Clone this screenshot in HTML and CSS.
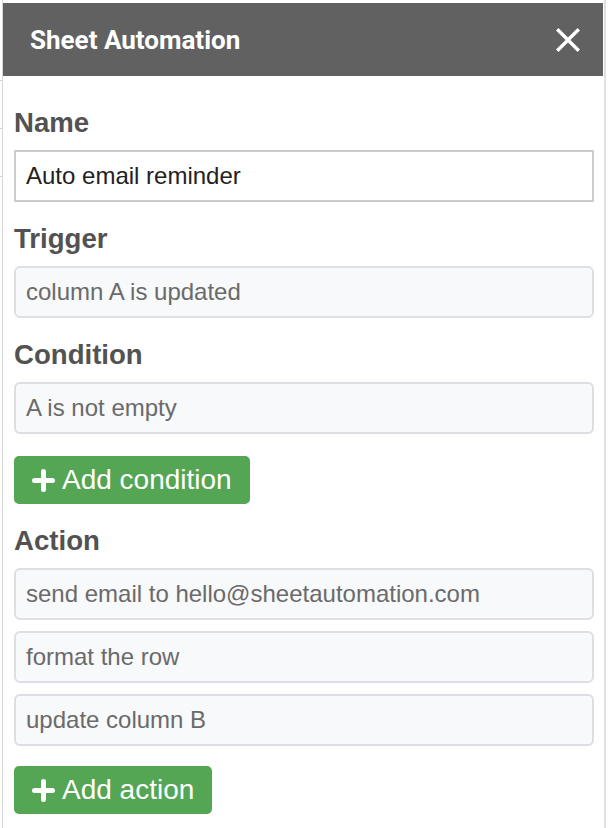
FILE: index.html
```html
<!DOCTYPE html>
<html lang="en">
<head>
<meta charset="utf-8">
<title>Sheet Automation</title>
<link rel="stylesheet" href="styles.css">
</head>
<body>
<div class="sidebar">
  <header class="topbar">
    <h1 class="title">Sheet Automation</h1>
    <button class="close" type="button" aria-label="Close">
      <svg width="24" height="24" viewBox="5 5 14 14" aria-hidden="true"><path fill="#fff" d="M19 6.41L17.59 5 12 10.59 6.41 5 5 6.41 10.59 12 5 17.59 6.41 19 12 13.41 17.59 19 19 17.59 13.41 12z"/></svg>
    </button>
  </header>
  <main class="content">
    <label class="label first">Name</label>
    <input class="field editable" type="text" value="Auto email reminder">

    <label class="label">Trigger</label>
    <input class="field locked" type="text" value="column A is updated" readonly>

    <label class="label">Condition</label>
    <input class="field locked" type="text" value="A is not empty" readonly>

    <button class="add" type="button">
      <svg class="plus" width="23" height="23" viewBox="0 0 23 23" aria-hidden="true"><path d="M11.5 2.5V20.5M2.5 11.5H20.5" stroke="#fff" stroke-width="5" stroke-linecap="round" fill="none"/></svg>
      <span>Add condition</span>
    </button>

    <label class="label">Action</label>
    <div class="stack">
      <input class="field locked" type="text" value="send email to hello@sheetautomation.com" readonly>
      <input class="field locked" type="text" value="format the row" readonly>
      <input class="field locked" type="text" value="update column B" readonly>
    </div>

    <button class="add" type="button">
      <svg class="plus" width="23" height="23" viewBox="0 0 23 23" aria-hidden="true"><path d="M11.5 2.5V20.5M2.5 11.5H20.5" stroke="#fff" stroke-width="5" stroke-linecap="round" fill="none"/></svg>
      <span>Add action</span>
    </button>
  </main>
</div>
</body>
</html>
```
FILE: styles.css
```css
html, body {
  margin: 0;
  padding: 0;
}

body {
  width: 608px;
  height: 828px;
  overflow: hidden;
  background-color: #ffffff;
  background-image:
    linear-gradient(#d4d4d4, #d4d4d4),
    linear-gradient(#d4d4d4, #d4d4d4),
    linear-gradient(#d4d4d4, #d4d4d4);
  background-size: 2px 1px, 2px 1px, 2px 1px;
  background-position: 0 80px, 0 128px, 0 176px;
  background-repeat: no-repeat;
  font-family: "Liberation Sans", Arial, sans-serif;
}

.sidebar {
  box-sizing: border-box;
  margin-left: 2px;
  width: 604px;
  height: 828px;
  padding: 3px 1px 0 0;
  border-left: 1px solid #d6d6d6;
  border-right: 2px solid #e0e0e0;
  background: #ffffff;
  display: flex;
  flex-direction: column;
}

.topbar {
  height: 73px;
  flex: none;
  background: #616161;
  display: flex;
  align-items: center;
  justify-content: space-between;
  padding: 0 23px 0 27px;
}

.title {
  margin: 0;
  font-family: Roboto, "Liberation Sans", sans-serif;
  font-weight: 700;
  font-size: 26px;
  color: #ffffff;
  letter-spacing: 0;
}

.close {
  display: flex;
  align-items: center;
  justify-content: center;
  width: 24px;
  height: 24px;
  padding: 0;
  border: 0;
  background: transparent;
}

.close svg {
  display: block;
}

.content {
  display: flex;
  flex-direction: column;
  align-items: flex-start;
  padding: 31px 9px 0 11px;
}

.label {
  display: block;
  margin: 21px 0 11px;
  font-size: 27.6px;
  line-height: 32px;
  height: 32px;
  font-weight: 700;
  color: #525252;
}

.label.first {
  margin-top: 0;
}

.field {
  box-sizing: border-box;
  display: block;
  width: 100%;
  height: 52px;
  margin: 0;
  padding: 0 10px;
  font-family: "Liberation Sans", Arial, sans-serif;
  font-size: 24px;
  outline: none;
}

.editable {
  border: 2px solid #cccccc;
  border-radius: 1px;
  background: #ffffff;
  color: #222222;
}

.locked {
  border: 2px solid #dedfe2;
  border-radius: 6px;
  background: #f8f9fa;
  color: #6a6a6a;
}

.stack {
  display: flex;
  flex-direction: column;
  gap: 11px;
  width: 100%;
}

.add {
  display: flex;
  align-items: center;
  gap: 7px;
  height: 48px;
  margin-top: 22px;
  padding: 0 18px;
  border: 0;
  border-radius: 5px;
  background: #54a554;
  color: #ffffff;
  font-family: "Liberation Sans", Arial, sans-serif;
  font-size: 28px;
}

.add + .label {
  margin-top: 21px;
}

.stack + .add {
  margin-top: 20px;
}

.plus {
  display: block;
  flex: none;
}
```
